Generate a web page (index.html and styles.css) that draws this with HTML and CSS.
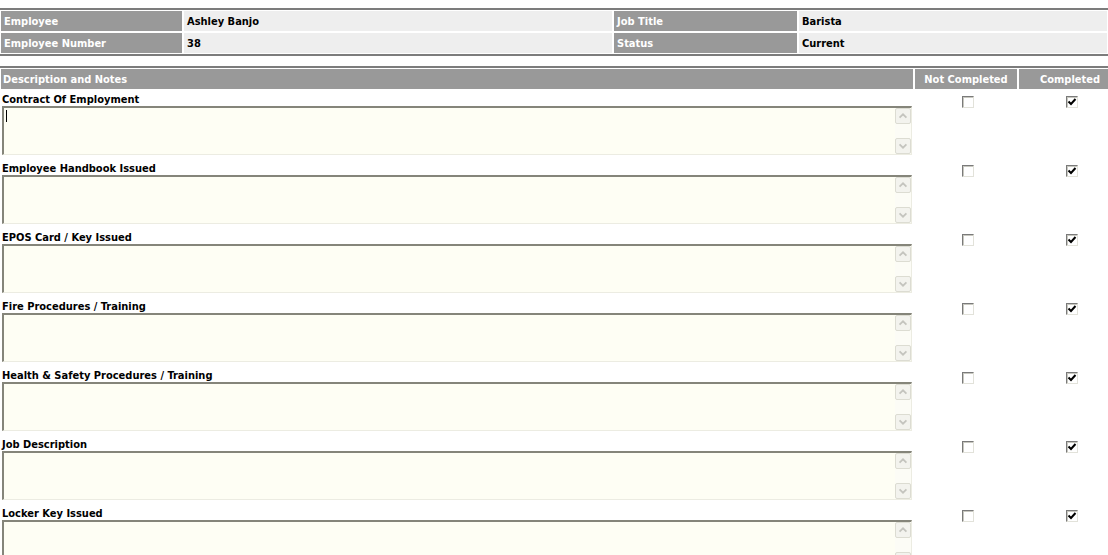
FILE: index.html
```html
<!DOCTYPE html>
<html>
<head>
<meta charset="utf-8">
<link rel="stylesheet" href="styles.css">
</head>
<body>
<div class="page">
  <div class="info">
    <div class="lbl">Employee</div><div class="val">Ashley Banjo</div><div class="lbl">Job Title</div><div class="val">Barista</div>
    <div class="lbl">Employee Number</div><div class="val">38</div><div class="lbl">Status</div><div class="val">Current</div>
  </div>

  <div class="checklist">
    <div class="grid head">
      <div class="hcell">Description and Notes</div>
      <div class="hcell c">Not Completed</div>
      <div class="hcell c">Completed</div>
    </div>

    <div class="grid item">
      <div class="desc">
        <div class="title">Contract Of Employment</div>
        <div class="ta"><div class="ta-body"><span class="caret"></span></div><div class="sb"><div class="sbb"><svg viewBox="0 0 14 14"><path d="M3 9 L7 5 L11 9" /></svg></div><div class="sbt"></div><div class="sbb"><svg viewBox="0 0 14 14"><path d="M3 5 L7 9 L11 5" /></svg></div></div></div>
      </div>
      <div class="cbc"><span class="cb"></span></div>
      <div class="cbc"><span class="cb"><svg viewBox="0 0 10 10"><path d="M1.5 4.5 L4 7 L8.5 2"/></svg></span></div>
    </div>

    <div class="grid item">
      <div class="desc">
        <div class="title">Employee Handbook Issued</div>
        <div class="ta"><div class="ta-body"></div><div class="sb"><div class="sbb"><svg viewBox="0 0 14 14"><path d="M3 9 L7 5 L11 9" /></svg></div><div class="sbt"></div><div class="sbb"><svg viewBox="0 0 14 14"><path d="M3 5 L7 9 L11 5" /></svg></div></div></div>
      </div>
      <div class="cbc"><span class="cb"></span></div>
      <div class="cbc"><span class="cb"><svg viewBox="0 0 10 10"><path d="M1.5 4.5 L4 7 L8.5 2"/></svg></span></div>
    </div>

    <div class="grid item">
      <div class="desc">
        <div class="title">EPOS Card / Key Issued</div>
        <div class="ta"><div class="ta-body"></div><div class="sb"><div class="sbb"><svg viewBox="0 0 14 14"><path d="M3 9 L7 5 L11 9" /></svg></div><div class="sbt"></div><div class="sbb"><svg viewBox="0 0 14 14"><path d="M3 5 L7 9 L11 5" /></svg></div></div></div>
      </div>
      <div class="cbc"><span class="cb"></span></div>
      <div class="cbc"><span class="cb"><svg viewBox="0 0 10 10"><path d="M1.5 4.5 L4 7 L8.5 2"/></svg></span></div>
    </div>

    <div class="grid item">
      <div class="desc">
        <div class="title">Fire Procedures / Training</div>
        <div class="ta"><div class="ta-body"></div><div class="sb"><div class="sbb"><svg viewBox="0 0 14 14"><path d="M3 9 L7 5 L11 9" /></svg></div><div class="sbt"></div><div class="sbb"><svg viewBox="0 0 14 14"><path d="M3 5 L7 9 L11 5" /></svg></div></div></div>
      </div>
      <div class="cbc"><span class="cb"></span></div>
      <div class="cbc"><span class="cb"><svg viewBox="0 0 10 10"><path d="M1.5 4.5 L4 7 L8.5 2"/></svg></span></div>
    </div>

    <div class="grid item">
      <div class="desc">
        <div class="title">Health &amp; Safety Procedures / Training</div>
        <div class="ta"><div class="ta-body"></div><div class="sb"><div class="sbb"><svg viewBox="0 0 14 14"><path d="M3 9 L7 5 L11 9" /></svg></div><div class="sbt"></div><div class="sbb"><svg viewBox="0 0 14 14"><path d="M3 5 L7 9 L11 5" /></svg></div></div></div>
      </div>
      <div class="cbc"><span class="cb"></span></div>
      <div class="cbc"><span class="cb"><svg viewBox="0 0 10 10"><path d="M1.5 4.5 L4 7 L8.5 2"/></svg></span></div>
    </div>

    <div class="grid item">
      <div class="desc">
        <div class="title">Job Description</div>
        <div class="ta"><div class="ta-body"></div><div class="sb"><div class="sbb"><svg viewBox="0 0 14 14"><path d="M3 9 L7 5 L11 9" /></svg></div><div class="sbt"></div><div class="sbb"><svg viewBox="0 0 14 14"><path d="M3 5 L7 9 L11 5" /></svg></div></div></div>
      </div>
      <div class="cbc"><span class="cb"></span></div>
      <div class="cbc"><span class="cb"><svg viewBox="0 0 10 10"><path d="M1.5 4.5 L4 7 L8.5 2"/></svg></span></div>
    </div>

    <div class="grid item">
      <div class="desc">
        <div class="title">Locker Key Issued</div>
        <div class="ta"><div class="ta-body"></div><div class="sb"><div class="sbb"><svg viewBox="0 0 14 14"><path d="M3 9 L7 5 L11 9" /></svg></div><div class="sbt"></div><div class="sbb"><svg viewBox="0 0 14 14"><path d="M3 5 L7 9 L11 5" /></svg></div></div></div>
      </div>
      <div class="cbc"><span class="cb"></span></div>
      <div class="cbc"><span class="cb"><svg viewBox="0 0 10 10"><path d="M1.5 4.5 L4 7 L8.5 2"/></svg></span></div>
    </div>
  </div>
</div>
</body>
</html>
```

FILE: styles.css
```css
html {
  overflow: hidden;
}
body {
  margin: 0;
  background: #ffffff;
  font-family: "DejaVu Sans Condensed", "DejaVu Sans", sans-serif;
  font-size: 11px;
  font-weight: bold;
  color: #000000;
}
.page {
  padding-top: 8px;
}
.info {
  display: grid;
  grid-template-columns: 181px 428px 183px 1fr;
  grid-auto-rows: 20px;
  gap: 2px;
  padding: 1px 1px 1px 1px;
  border-top: 2px solid #7c7c7c;
  border-bottom: 2px solid #7c7c7c;
}
.lbl {
  background: #999999;
  color: #ffffff;
  padding: 2px 0 0 3px;
  line-height: 18px;
}
.val {
  background: #eeeeee;
  color: #000000;
  padding: 2px 0 0 3px;
  line-height: 18px;
}
.checklist {
  margin-top: 10px;
  border-top: 2px solid #7c7c7c;
  padding-top: 1px;
  width: 1124px;
}
.grid {
  display: grid;
  grid-template-columns: 912px 102px 102px;
  column-gap: 2px;
  padding-left: 1px;
}
.head {
  height: 20px;
}
.hcell {
  background: #999999;
  color: #ffffff;
  line-height: 18px;
  padding: 2px 0 0 2px;
}
.hcell.c {
  text-align: center;
  padding-left: 0;
}
.item {
  padding-bottom: 5px;
}
.head + .item {
  padding-top: 2px;
}
.desc {
  display: flex;
  flex-direction: column;
}
.title {
  height: 15px;
  box-sizing: border-box;
  padding: 1px 0 0 1px;
  line-height: 15px;
  white-space: nowrap;
}
.ta {
  margin-left: 1px;
  width: 910px;
  height: 49px;
  box-sizing: border-box;
  background: #fefef4;
  border-top: 2px solid #85857a;
  border-left: 2px solid #85857a;
  border-right: 1px solid #ecece2;
  border-bottom: 1px solid #ecece2;
  display: flex;
}
.ta-body {
  flex: 1;
  padding: 1px 0 0 1px;
}
.caret {
  display: block;
  width: 1px;
  height: 12px;
  margin-top: 1px;
  margin-left: 1px;
  background: #000000;
}
.sb {
  width: 16px;
  display: flex;
  flex-direction: column;
  justify-content: space-between;
  background: #fcfcf6;
}
.sbb {
  width: 16px;
  height: 16px;
  box-sizing: border-box;
  border: 1px solid #dcdcd2;
  border-radius: 2px;
  background: #f3f3ee;
  display: flex;
  align-items: center;
  justify-content: center;
}
.sbb svg {
  width: 12px;
  height: 12px;
  fill: none;
  stroke: #c4c4be;
  stroke-width: 2;
}
.cbc {
  display: flex;
  justify-content: center;
  padding: 5px 0 0 3px;
}
.cb {
  width: 12px;
  height: 12px;
  box-sizing: border-box;
  background: #ffffff;
  border-top: 1px solid #7a7a7a;
  border-left: 1px solid #7a7a7a;
  border-right: 1px solid #e2e2da;
  border-bottom: 1px solid #e2e2da;
  box-shadow: inset 1px 1px 0 #c8c8c0;
  display: flex;
  align-items: center;
  justify-content: center;
}
.cb svg {
  width: 10px;
  height: 10px;
  fill: none;
  stroke: #000000;
  stroke-width: 2;
}
```
